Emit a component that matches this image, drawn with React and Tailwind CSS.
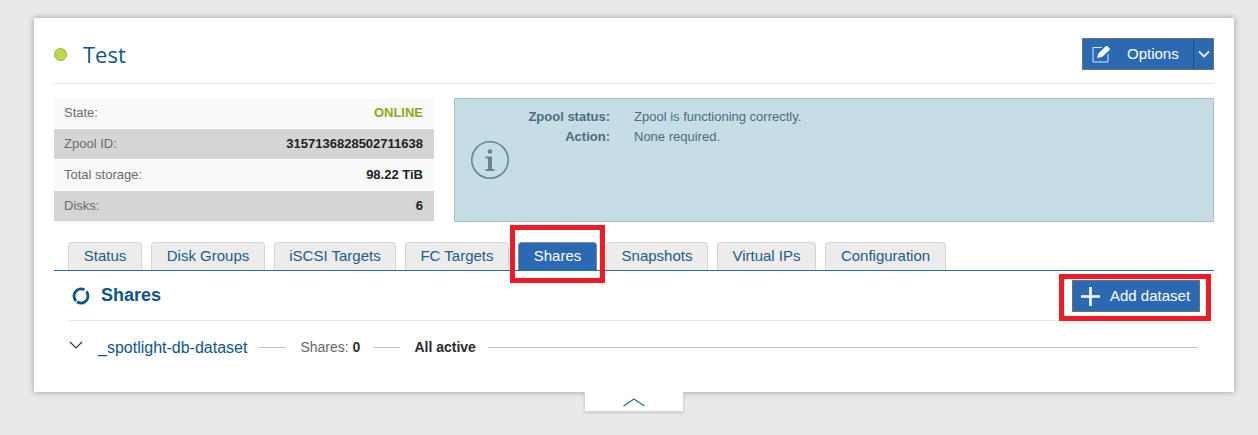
const stats = [
    { label: 'State:', value: 'ONLINE', valueClass: 'text-[#8aac1c]', rowClass: 'bg-[#f9f9f9]' },
    { label: 'Zpool ID:', value: '3157136828502711638', valueClass: 'text-[#222]', rowClass: 'bg-[#d5d5d5]' },
    { label: 'Total storage:', value: '98.22 TiB', valueClass: 'text-[#222]', rowClass: 'bg-[#f9f9f9]' },
    { label: 'Disks:', value: '6', valueClass: 'text-[#222]', rowClass: 'bg-[#d5d5d5]' },
];

const tabs = [
    { name: 'Status', width: 'w-[74px]' },
    { name: 'Disk Groups', width: 'w-[114px]' },
    { name: 'iSCSI Targets', width: 'w-[122px]' },
    { name: 'FC Targets', width: 'w-[104px]' },
    { name: 'Shares', width: 'w-[79px]', active: true },
    { name: 'Snapshots', width: 'w-[102px]' },
    { name: 'Virtual IPs', width: 'w-[99px]' },
    { name: 'Configuration', width: 'w-[121px]' },
];

function Tab({ name, width, active }) {
    if (active) {
        return (
            <div className={`relative h-[28px] ${width} flex items-center justify-center rounded-t-[4px] border border-b-0 border-[#7a8794] bg-[#2b6ab3] text-[15px] text-white`}>
                {name}
                <span className="absolute left-[-9px] top-[-18px] w-[95px] h-[58px] border-[5px] border-[#ed1c24]" />
            </div>
        );
    }
    return (
        <div className={`h-[28px] ${width} flex items-center justify-center rounded-t-[4px] border border-b-0 border-[#d4d4d4] bg-[#ececec] text-[15px] text-[#1f5b8c]`}>
            {name}
        </div>
    );
}

function Rule({ className }) {
    return <span className={`h-px bg-[#c4c4c4] ${className}`} />;
}

export default function App() {
    return (
        <div className="relative w-[1258px] h-[435px] overflow-hidden bg-[#e9e9e9] pt-[18px] pl-[34px] font-['Liberation_Sans',Arial,sans-serif]">
            <div className="w-[1200px] h-[374px] bg-white px-[20px] shadow-[0_0_6px_rgba(0,0,0,0.35)]">
                <div className="h-[66px] flex items-center justify-between border-b border-[#e6e6e6] pt-[8px]">
                    <div className="flex items-center">
                        <span className="w-[13px] h-[13px] rounded-full bg-[#b9d84a] border border-[#98b82c]" />
                        <span className="ml-[16px] mb-[2px] text-[22px] leading-none text-[#0f5687] font-['Open_Sans',sans-serif]">Test</span>
                    </div>
                    <div className="flex h-[32px] w-[132px] mt-[-1px] border border-[#6e7276] bg-[#2b6ab3] text-white text-[15px]">
                        <div className="flex flex-1 items-center border-r border-[#234c80] pl-[9px]">
                            <svg width="20" height="18" viewBox="0 0 20 18" fill="none">
                                <path d="M10 2.500H1v14.500h15V9" stroke="#dfe9f4" strokeWidth="1" />
                                <path d="M5 13l1.200-4.200L13.500 1.500c.8-.6 1.500-.5 2.200.1l1.600 1.500c.7.7.6 1.400 0 2.100L10 12z" fill="#fff" />
                            </svg>
                            <span className="ml-[15px]">Options</span>
                        </div>
                        <div className="flex w-[19px] items-center justify-center">
                            <svg width="12" height="8" viewBox="0 0 12 8" fill="none">
                                <path d="M1 1.500l5 5 5-5" stroke="#e4edf7" strokeWidth="1.800" />
                            </svg>
                        </div>
                    </div>
                </div>

                <div className="flex mt-[14px] gap-[20px]">
                    <div className="w-[380px] flex flex-col gap-px">
                        {stats.map(s => (
                            <div key={s.label} className={`h-[30px] flex items-center justify-between pl-[10px] pr-[11px] text-[13px] ${s.rowClass}`}>
                                <span className="text-[#6b6b6b]">{s.label}</span>
                                <span className={`font-bold ${s.valueClass}`}>{s.value}</span>
                            </div>
                        ))}
                    </div>
                    <div className="relative w-[760px] h-[124px] border border-[#a0c3d3] bg-[#c6dde6] text-[13px] text-[#4a6d80]">
                        <svg className="absolute left-[15px] top-[41px]" width="40" height="40" viewBox="0 0 40 40" fill="none">
                            <circle cx="20" cy="20" r="18.200" stroke="#5f8799" strokeWidth="1.600" />
                            <circle cx="20" cy="11.500" r="2.300" fill="#5f8799" />
                            <path d="M15.500 16.500h6.500v12.500h2.500v2h-9v-2H18v-10.500h-2.500z" fill="#5f8799" />
                        </svg>
                        <div className="flex pt-[8px] leading-[20px]">
                            <div className="w-[155px] text-right font-bold">
                                <div>Zpool status:</div>
                                <div>Action:</div>
                            </div>
                            <div className="ml-[24px]">
                                <div>Zpool is functioning correctly.</div>
                                <div>None required.</div>
                            </div>
                        </div>
                    </div>
                </div>

                <div className="flex gap-[9px] mt-[20px] pl-[14px] h-[29px] border-b border-[#2b6ab3]">
                    {tabs.map(t => (
                        <Tab key={t.name} {...t} />
                    ))}
                </div>

                <div className="mx-[14px]">
                    <div className="h-[50px] flex items-center justify-between border-b border-[#e6e6e6]">
                        <div className="flex items-center">
                            <svg className="ml-[4px]" width="18" height="18" viewBox="0 0 18 18" fill="none">
                                <circle cx="9" cy="9" r="7" stroke="#0f5687" strokeWidth="2.800" strokeDasharray="20 1.200 20 2.800" transform="rotate(-40 9 9)" />
                            </svg>
                            <span className="ml-[11px] text-[18px] font-bold text-[#0f5687]">Shares</span>
                        </div>
                        <div className="relative flex w-[128px] h-[32px] items-center border border-[#6e7276] bg-[#2b6ab3] text-[15px] text-white mt-[1px]">
                            <svg className="ml-[8px]" width="19" height="19" viewBox="0 0 19 19" fill="none">
                                <path d="M9.500 0v19M0 9.500h19" stroke="#fff" strokeWidth="2.600" />
                            </svg>
                            <span className="ml-[10px]">Add dataset</span>
                            <span className="absolute left-[-14px] top-[-7px] w-[152px] h-[47px] border-[5px] border-[#ed1c24]" />
                        </div>
                    </div>
                    <div className="flex items-center h-[52px] text-[14px]">
                        <svg width="14" height="9" viewBox="0 0 14 9" fill="none" className="mb-[4px] ml-[1px]">
                            <path d="M1 1l6 6 6-6" stroke="#333" strokeWidth="1.200" />
                        </svg>
                        <span className="ml-[15px] mt-[2px] text-[16px] text-[#0f5687]">_spotlight-db-dataset</span>
                        <Rule className="ml-[12px] w-[27px]" />
                        <span className="ml-[14px] text-[#666]">Shares: <b className="text-[#333]">0</b></span>
                        <Rule className="ml-[13px] w-[27px]" />
                        <b className="ml-[14px] text-[#2b2b2b]">All active</b>
                        <Rule className="ml-[12px] flex-1 mr-[2px]" />
                    </div>
                </div>
            </div>
            <div className="ml-[550px] w-[100px] h-[20px] flex justify-center items-center bg-white border-x border-b border-[#d8d8d8] shadow-[0_1px_2px_rgba(0,0,0,0.15)]">
                <svg width="22" height="10" viewBox="0 0 22 10" fill="none">
                    <path d="M0.500 9l10.500-7 10.500 7" stroke="#2a6fa8" strokeWidth="1.400" />
                </svg>
            </div>
        </div>
    );
}
